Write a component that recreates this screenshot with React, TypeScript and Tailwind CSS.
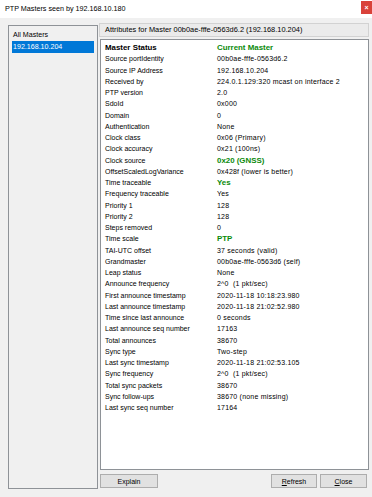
import React from "react";

type Row = { l: string; v: string; g?: boolean };

const rows: Row[] = [
  { l: "Master Status", v: "Current Master", g: true },
  { l: "Source portIdentity", v: "00b0ae-fffe-0563d6.2" },
  { l: "Source IP Address", v: "192.168.10.204" },
  { l: "Received by", v: "224.0.1.129:320 mcast on interface 2" },
  { l: "PTP version", v: "2.0" },
  { l: "SdoId", v: "0x000" },
  { l: "Domain", v: "0" },
  { l: "Authentication", v: "None" },
  { l: "Clock class", v: "0x06 (Primary)" },
  { l: "Clock accuracy", v: "0x21 (100ns)" },
  { l: "Clock source", v: "0x20 (GNSS)", g: true },
  { l: "OffsetScaledLogVariance", v: "0x428f (lower is better)" },
  { l: "Time traceable", v: "Yes", g: true },
  { l: "Frequency traceable", v: "Yes" },
  { l: "Priority 1", v: "128" },
  { l: "Priority 2", v: "128" },
  { l: "Steps removed", v: "0" },
  { l: "Time scale", v: "PTP", g: true },
  { l: "TAI-UTC offset", v: "37 seconds (valid)" },
  { l: "Grandmaster", v: "00b0ae-fffe-0563d6 (self)" },
  { l: "Leap status", v: "None" },
  { l: "Announce frequency", v: "2^0\u00a0\u00a0(1 pkt/sec)" },
  { l: "First announce timestamp", v: "2020-11-18 10:18:23.980" },
  { l: "Last announce timestamp", v: "2020-11-18 21:02:52.980" },
  { l: "Time since last announce", v: "0 seconds" },
  { l: "Last announce seq number", v: "17163" },
  { l: "Total announces", v: "38670" },
  { l: "Sync type", v: "Two-step" },
  { l: "Last sync timestamp", v: "2020-11-18 21:02:53.105" },
  { l: "Sync frequency", v: "2^0\u00a0\u00a0(1 pkt/sec)" },
  { l: "Total sync packets", v: "38670" },
  { l: "Sync follow-ups", v: "38670 (none missing)" },
  { l: "Last sync seq number", v: "17164" },
];

export default function App() {
  return (
    <div
      className="w-[372px] h-[497px] bg-[#f0f0f0] flex flex-col overflow-hidden text-[#000]"
      style={{ fontFamily: '"Liberation Sans", Arial, sans-serif' }}
    >
      {/* Title bar */}
      <div className="h-[18px] bg-white flex items-start justify-between shrink-0">
        <div className="pl-[5px] pt-[3px] text-[7.2px] leading-[11px]">
          PTP Masters seen by 192.168.10.180
        </div>
        <div className="w-[11px] h-[13px] mt-[1px] bg-[#d9423a] flex items-center justify-center text-white text-[7px] leading-none font-bold">
          ×
        </div>
      </div>

      {/* Body */}
      <div className="flex pl-[8px] pt-[5px] text-[7px]">
        {/* Left list */}
        <div className="mt-[2px] w-[90px] h-[464px] border border-[#8e9297] bg-[#f0f0f0] pt-[3px] px-[3px] text-[7.1px]">
          <div className="leading-[12px] pl-[1px] h-[12px]">All Masters</div>
          <div className="leading-[12px] h-[12px] bg-[#0078d7] text-white pl-[1px]">
            192.168.10.204
          </div>
        </div>

        {/* Right column */}
        <div className="ml-[1px] w-[270px] flex flex-col">
          <div className="h-[14px] bg-[#ebebeb] border border-[#d2d2d2] pl-[5px] leading-[12px] text-[7.4px]">
            Attributes for Master 00b0ae-fffe-0563d6.2 (192.168.10.204)
          </div>
          <div className="mt-[2px] ml-[1px] h-[431px] bg-white border border-[#8e9297] pl-[4px] pt-[2px]">
            {rows.map((r, i) => (
              <div key={i} className="flex items-baseline h-[11.25px] leading-[11.25px] whitespace-nowrap">
                <div
                  className={
                    "w-[112px] shrink-0 " +
                    (i === 0 ? "font-bold text-[7.9px]" : "text-[7px]")
                  }
                >
                  {r.l}
                </div>
                <div
                  className={
                    r.g
                      ? "text-[#0a8a0a] font-bold text-[7.9px]"
                      : "text-[7px] tracking-[0.2px]"
                  }
                >
                  {r.v}
                </div>
              </div>
            ))}
          </div>
          <div className="mt-[4px] ml-[1px] flex items-start">
            <div className="w-[58px] h-[14px] bg-[#e1e1e1] border border-[#adadad] flex items-center justify-center leading-none">
              Explain
            </div>
            <div className="ml-auto w-[46px] h-[14px] bg-[#e1e1e1] border border-[#adadad] flex items-center justify-center leading-none">
              <span>
                <span className="underline">R</span>efresh
              </span>
            </div>
            <div className="ml-[3px] mr-[2px] w-[47px] h-[14px] bg-[#e1e1e1] border border-[#adadad] flex items-center justify-center leading-none">
              <span>
                <span className="underline">C</span>lose
              </span>
            </div>
          </div>
        </div>
      </div>
    </div>
  );
}
